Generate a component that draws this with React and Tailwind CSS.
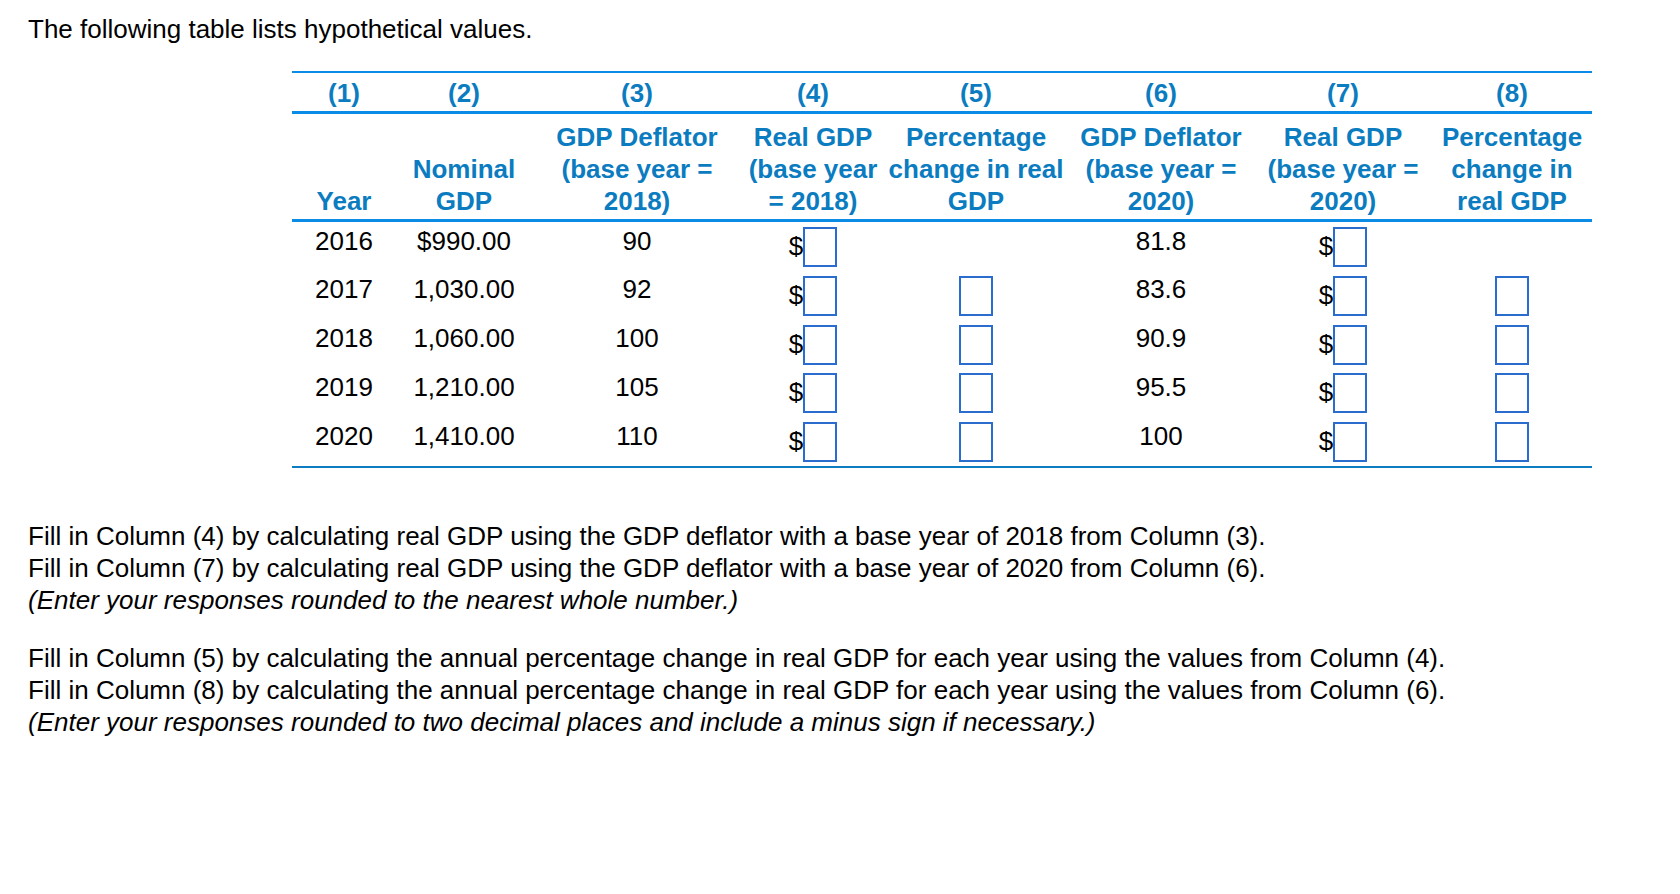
import React from "react";

const cols = "grid grid-cols-[104px_136px_210px_142px_184px_186px_178px_160px]";

const headers = [
  ["Year"],
  ["Nominal", "GDP"],
  ["GDP Deflator", "(base year =", "2018)"],
  ["Real GDP", "(base year", "= 2018)"],
  ["Percentage", "change in real", "GDP"],
  ["GDP Deflator", "(base year =", "2020)"],
  ["Real GDP", "(base year =", "2020)"],
  ["Percentage", "change in", "real GDP"],
];

const rows = [
  { year: "2016", nominal: "$990.00", d18: "90", d20: "81.8", first: true },
  { year: "2017", nominal: "1,030.00", d18: "92", d20: "83.6" },
  { year: "2018", nominal: "1,060.00", d18: "100", d20: "90.9" },
  { year: "2019", nominal: "1,210.00", d18: "105", d20: "95.5" },
  { year: "2020", nominal: "1,410.00", d18: "110", d20: "100" },
];

const Box = () => (
  <input
    type="text"
    className="w-[34px] h-[40px] border-2 border-[#2b6dce] bg-white outline-none"
  />
);

const DollarBox = () => (
  <div className="flex items-start">
    <span className="mt-[4px] leading-[31px]">$</span>
    <Box />
  </div>
);

// text cells sit a touch higher than the answer boxes
const Cell = ({ children }) => (
  <div className="flex justify-center pt-[3.5px] leading-[31px]">{children}</div>
);

const BoxCell = ({ children }) => (
  <div className="flex justify-center pt-[5px]">{children}</div>
);

export default function App() {
  return (
    <div className="min-h-screen bg-white text-black text-[26px] font-['Liberation_Sans',Arial,sans-serif]">
      <div className="pl-[28px] pt-[14px]">
        <p className="leading-[30px]">The following table lists hypothetical values.</p>

        <div className="ml-[264px] mt-[27px] w-[1300px]">
          {/* column numbers */}
          <div className={`${cols} h-[43px] border-t-2 border-b-[3px] border-[#0a8be6] font-bold text-[#0b7cc0]`}>
            {[1, 2, 3, 4, 5, 6, 7, 8].map((n) => (
              <div key={n} className="flex items-end justify-center pb-[2px] leading-[31px]">
                ({n})
              </div>
            ))}
          </div>

          {/* column titles */}
          <div className={`${cols} h-[108px] border-b-[3px] border-[#0a8be6] font-bold text-[#0b7cc0]`}>
            {headers.map((lines, i) => (
              <div key={i} className="flex flex-col items-center justify-end pb-[2px] leading-[32px] text-center">
                {lines.map((l) => (
                  <span key={l} className="whitespace-nowrap">
                    {l}
                  </span>
                ))}
              </div>
            ))}
          </div>

          {/* data */}
          <div className="border-b-2 border-[#0b7dc0]">
            {rows.map((r) => (
              <div key={r.year} className={`${cols} h-[48.8px]`}>
                <Cell>{r.year}</Cell>
                <Cell>{r.nominal}</Cell>
                <Cell>{r.d18}</Cell>
                <BoxCell>
                  <DollarBox />
                </BoxCell>
                <BoxCell>{!r.first && <Box />}</BoxCell>
                <Cell>{r.d20}</Cell>
                <BoxCell>
                  <DollarBox />
                </BoxCell>
                <BoxCell>{!r.first && <Box />}</BoxCell>
              </div>
            ))}
          </div>
        </div>

        <div className="mt-[52px] leading-[32px] whitespace-nowrap">
          <p>Fill in Column (4) by calculating real GDP using the GDP deflator with a base year of 2018 from Column (3).</p>
          <p>Fill in Column (7) by calculating real GDP using the GDP deflator with a base year of 2020 from Column (6).</p>
          <p className="italic">(Enter your responses rounded to the nearest whole number.)</p>

          <p className="mt-[26px]">
            Fill in Column (5) by calculating the annual percentage change in real GDP for each year using the values from Column (4).
          </p>
          <p>
            Fill in Column (8) by calculating the annual percentage change in real GDP for each year using the values from Column (6).
          </p>
          <p className="italic">(Enter your responses rounded to two decimal places and include a minus sign if necessary.)</p>
        </div>
      </div>
    </div>
  );
}
